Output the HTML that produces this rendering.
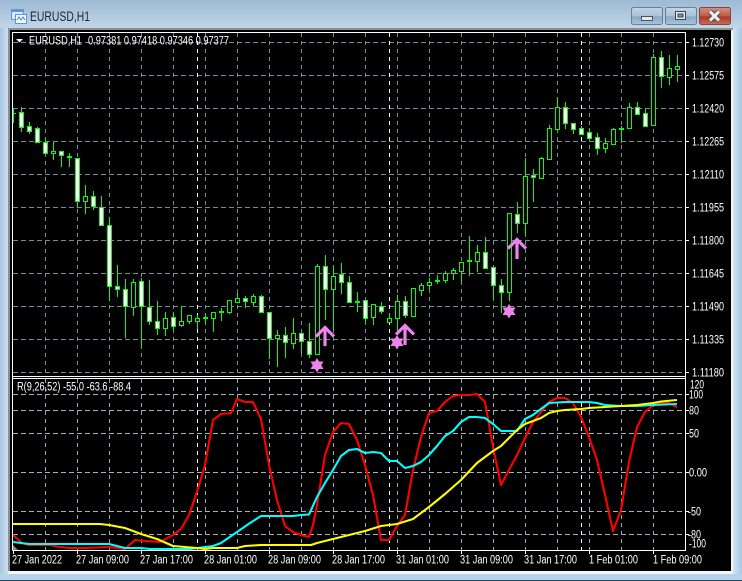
<!DOCTYPE html>
<html><head><meta charset="utf-8"><title>EURUSD,H1</title>
<style>
html,body{margin:0;padding:0;width:742px;height:581px;overflow:hidden;background:#b9d1e8}
svg{display:block;position:absolute;left:0;top:0}
text{font-family:"Liberation Sans",sans-serif}
</style></head><body>
<svg width="742" height="581" viewBox="0 0 742 581" xmlns="http://www.w3.org/2000/svg">
<defs>
<linearGradient id="tb" x1="0" y1="0" x2="0" y2="1"><stop offset="0" stop-color="#9db9d4"/><stop offset="1" stop-color="#c4d7e9"/></linearGradient>
<linearGradient id="lb" x1="0" y1="0" x2="1" y2="0"><stop offset="0" stop-color="#a9c5e2"/><stop offset="1" stop-color="#d3e3f1"/></linearGradient>
<linearGradient id="rb" x1="0" y1="0" x2="1" y2="0"><stop offset="0" stop-color="#d3e3f1"/><stop offset="1" stop-color="#a9c8e6"/></linearGradient>
<linearGradient id="btn" x1="0" y1="0" x2="0" y2="1"><stop offset="0" stop-color="#c3d4e4"/><stop offset=".5" stop-color="#a9c1d8"/><stop offset=".55" stop-color="#88a8c6"/><stop offset="1" stop-color="#a8c6de"/></linearGradient>
<linearGradient id="cl" x1="0" y1="0" x2="0" y2="1"><stop offset="0" stop-color="#d98f82"/><stop offset=".5" stop-color="#c25a4a"/><stop offset=".55" stop-color="#ad3626"/><stop offset="1" stop-color="#c86f56"/></linearGradient>
</defs>
<rect width="742" height="581" fill="#b9d1e8"/>
<rect width="742" height="29" fill="url(#tb)"/>
<rect x="0" y="28" width="9" height="553" fill="url(#lb)"/>
<rect x="733" y="28" width="9" height="553" fill="url(#rb)"/>
<rect x="0" y="574" width="742" height="6" fill="#b5d2ea"/>
<rect x="0" y="580" width="742" height="1" fill="#1b4c60"/>
<rect x="8" y="28" width="725" height="2" fill="#8c8f92"/>
<rect x="8" y="28" width="2" height="544" fill="#8c8f92"/>
<rect x="8" y="571" width="725" height="3" fill="#f2f6fa"/>
<rect x="731" y="30" width="2" height="544" fill="#f2f6fa"/>
<rect x="10" y="30" width="721" height="541" fill="#000"/>

<!-- title icon -->
<g shape-rendering="crispEdges">
<rect x="11.5" y="9.5" width="12" height="10" fill="#dbe9f6" stroke="#5a97d6"/>
<rect x="12" y="10" width="11" height="2" fill="#5a97d6"/>
<rect x="15.5" y="14.5" width="11" height="9" fill="#f2f7fc" stroke="#5a97d6"/>
<path d="M17 20l2-3 2 3 2-3 2 3" fill="none" stroke="#4f86c0" stroke-width="1" shape-rendering="auto"/>
</g>
<text x="30" y="21" font-size="13.5" fill="#1c2a38" textLength="60" lengthAdjust="spacingAndGlyphs">EURUSD,H1</text>

<!-- window buttons -->
<rect x="631.5" y="7.5" width="31" height="17" rx="2" fill="url(#btn)" stroke="#6b7f93"/>
<rect x="641.5" y="16.5" width="11" height="4" fill="#e8e8e8" stroke="#4a5560"/>
<rect x="665.5" y="7.5" width="31" height="17" rx="2" fill="url(#btn)" stroke="#6b7f93"/>
<rect x="675.5" y="11.5" width="10" height="8" fill="#e8e8e8" stroke="#3c4650"/>
<rect x="678" y="14" width="5" height="3" fill="#7d94aa" stroke="#3c4650" stroke-width="1"/>
<rect x="699.5" y="7.5" width="31" height="17" rx="2" fill="url(#cl)" stroke="#7c4a44"/>
<path d="M710 11.500l9 9M719 11.500l-9 9" stroke="#3e4448" stroke-width="5" fill="none"/>
<path d="M710 11.500l9 9M719 11.500l-9 9" stroke="#ececec" stroke-width="3.200" fill="none"/>

<!-- grid -->
<g stroke="#778899" stroke-width="1" stroke-dasharray="5 3" shape-rendering="crispEdges" fill="none">
<path d="M13 42.5H685M13 75.5H685M13 108.5H685M13 141.5H685M13 174.5H685M13 207.5H685M13 240.5H685M13 273.5H685M13 306.5H685M13 339.5H685M13 372.5H685"/>
<path d="M13 394.5H685M13 410.5H685M13 433.5H685M13 472.5H685M13 511.5H685M13 534.5H685" stroke="#a8b2bc"/>
<path stroke-dasharray="4 4" d="M45.5 33V376M77.5 33V376M109.5 33V376M141.5 33V376M173.5 33V376M205.5 33V376M237.5 33V376M269.5 33V376M301.5 33V376M333.5 33V376M365.5 33V376M397.5 33V376M429.5 33V376M461.5 33V376M493.5 33V376M525.5 33V376M557.5 33V376M589.5 33V376M621.5 33V376M653.5 33V376"/>
<path stroke-dasharray="4 4" stroke="#9aa6b2" d="M45.5 379V550M77.5 379V550M109.5 379V550M141.5 379V550M173.5 379V550M205.5 379V550M237.5 379V550M269.5 379V550M301.5 379V550M333.5 379V550M365.5 379V550M397.5 379V550M429.5 379V550M461.5 379V550M493.5 379V550M525.5 379V550M557.5 379V550M589.5 379V550M621.5 379V550M653.5 379V550"/>
<path stroke="#fff" stroke-dasharray="4 4" d="M197.5 33V376M389.5 33V376M581.5 33V376M197.5 379V550M389.5 379V550M581.5 379V550"/>
</g>

<!-- wicks -->
<path shape-rendering="crispEdges" fill="none" stroke="#00ff00" stroke-width="1" d="M13.5 108V123M21.5 107V132M29.5 122V134M37.5 127V143M45.5 138V155M53.5 141V160M61.5 151V167M69.5 153V167M77.5 158V208M85.5 185V214M93.5 191V210M101.5 196V225M109.5 217V301M117.5 265V297M125.5 279V338M133.5 279V316M141.5 278V347M149.5 280V325M157.5 301V335M165.5 312V336M173.5 312V330M181.5 306V327M189.5 315V324M197.5 315V329M205.5 313V324M213.5 312V332M221.5 308V321M229.5 300V314M237.5 293V302M245.5 296V308M253.5 294V306M261.5 295V312M269.5 312V359M277.5 330V367M285.5 327V358M293.5 318V349M301.5 333V353M309.5 323V358M317.5 264V355M325.5 255V320M333.5 267V331M341.5 263V294M349.5 276V302M357.5 292V312M365.5 300V323M373.5 304V325M381.5 302V314M389.5 313V322M397.5 295V330M405.5 296V318M413.5 288V317M421.5 283V296M429.5 278V290M437.5 275V284M445.5 271V283M453.5 268V280M461.5 262V283M469.5 236V276M477.5 245V272M485.5 237V268M493.5 267V300M501.5 279V313M509.5 213V301M517.5 202V233M525.5 158V235M533.5 169V202M541.5 157V179M549.5 125V160M557.5 97V131M565.5 102V129M573.5 123V134M581.5 126V134M589.5 128V138M597.5 133V155M605.5 138V153M613.5 128V144M621.5 126V143M629.5 103V128M637.5 102V115M645.5 108V126M653.5 54V125M661.5 51V88M669.5 55V85M677.5 55V82"/>
<!-- doji ticks -->
<path shape-rendering="crispEdges" fill="none" stroke="#00ff00" stroke-width="1" d="M13 113.5H16M35 128.5H40M67 157.5H72M203 318.5H208M219 312.5H224M355 302.5H360M435 281.5H440M467 261.5H472M619 129.5H624M67 156.5H72M203 317.5H208M219 311.5H224M355 301.5H360M435 280.5H440M467 260.5H472M619 128.5H624"/>
<!-- bearish bodies -->
<path shape-rendering="crispEdges" fill="#fff" stroke="#00ff00" stroke-width="1" d="M19.5 112.5h4V127.5h-4zM27.5 126.5h4V131.5h-4zM35.5 128.5h4V142.5h-4zM43.5 142.5h4V153.5h-4zM59.5 151.5h4V155.5h-4zM75.5 158.5h4V201.5h-4zM91.5 196.5h4V206.5h-4zM99.5 207.5h4V225.5h-4zM107.5 225.5h4V286.5h-4zM115.5 286.5h4V289.5h-4zM123.5 289.5h4V306.5h-4zM139.5 281.5h4V306.5h-4zM147.5 307.5h4V321.5h-4zM155.5 321.5h4V328.5h-4zM171.5 317.5h4V326.5h-4zM243.5 298.5h4V301.5h-4zM259.5 296.5h4V312.5h-4zM267.5 312.5h4V338.5h-4zM283.5 335.5h4V342.5h-4zM299.5 333.5h4V341.5h-4zM307.5 341.5h4V354.5h-4zM323.5 266.5h4V289.5h-4zM339.5 274.5h4V282.5h-4zM347.5 282.5h4V302.5h-4zM363.5 300.5h4V318.5h-4zM379.5 306.5h4V311.5h-4zM403.5 301.5h4V315.5h-4zM483.5 252.5h4V268.5h-4zM491.5 267.5h4V285.5h-4zM499.5 285.5h4V292.5h-4zM515.5 214.5h4V223.5h-4zM531.5 175.5h4V177.5h-4zM563.5 107.5h4V123.5h-4zM571.5 123.5h4V129.5h-4zM579.5 128.5h4V134.5h-4zM587.5 132.5h4V138.5h-4zM595.5 137.5h4V148.5h-4zM635.5 107.5h4V114.5h-4zM643.5 113.5h4V126.5h-4zM659.5 57.5h4V76.5h-4z"/>
<!-- bullish bodies -->
<path shape-rendering="crispEdges" fill="#000" stroke="#00ff00" stroke-width="1" d="M51.5 151.5h4V153.5h-4zM83.5 196.5h4V201.5h-4zM131.5 282.5h4V307.5h-4zM163.5 318.5h4V328.5h-4zM179.5 321.5h4V325.5h-4zM187.5 315.5h4V321.5h-4zM195.5 318.5h4V321.5h-4zM211.5 312.5h4V318.5h-4zM227.5 300.5h4V312.5h-4zM235.5 298.5h4V302.5h-4zM251.5 296.5h4V302.5h-4zM275.5 335.5h4V338.5h-4zM291.5 333.5h4V343.5h-4zM315.5 266.5h4V354.5h-4zM331.5 276.5h4V289.5h-4zM371.5 304.5h4V317.5h-4zM387.5 318.5h4V322.5h-4zM395.5 301.5h4V318.5h-4zM411.5 288.5h4V316.5h-4zM419.5 285.5h4V290.5h-4zM427.5 282.5h4V285.5h-4zM443.5 273.5h4V280.5h-4zM451.5 270.5h4V273.5h-4zM459.5 262.5h4V271.5h-4zM475.5 252.5h4V261.5h-4zM507.5 213.5h4V292.5h-4zM523.5 176.5h4V223.5h-4zM539.5 158.5h4V178.5h-4zM547.5 128.5h4V159.5h-4zM555.5 107.5h4V129.5h-4zM603.5 143.5h4V148.5h-4zM611.5 129.5h4V144.5h-4zM627.5 107.5h4V128.5h-4zM651.5 57.5h4V125.5h-4zM667.5 68.5h4V77.5h-4zM675.5 66.5h4V69.5h-4z"/>

<!-- arrows -->
<g fill="none" stroke="#ee82ee" stroke-width="3.200">
<path d="M316 336.500L325 327.500L334 336.500M325 327.500V346"/>
<path d="M396 334.500L405 325.500L414 334.500M405 325.500V345"/>
<path d="M508 248.500L517 239.500L526 248.500M517 239.500V259"/>
</g>
<!-- stars -->
<g fill="#ee82ee">
<path d="M317 358l6.500 11h-13z"/><path d="M317 372.500l6.500-11h-13z"/>
<path d="M397 335l6.500 11h-13z"/><path d="M397 349.500l6.500-11h-13z"/>
<path d="M509 304l6.500 11h-13z"/><path d="M509 318.500l6.500-11h-13z"/>
</g>

<!-- indicator -->
<path d="M13 545L18 550H13z" fill="#8a8a8a"/>
<g fill="none" stroke-width="2.100" stroke-linejoin="round">
<path stroke="#ff0000" d="M13 535L22 543L29 545L50 545L60 547L70 548L85 548L109 547L125 549L135 540L145 541L160 542L173 535L181 529L189 515L197 492L205 465L213 420L221 414L231 413L237 399L245 402L253 402L261 419L269 465L277 500L285 526L293 532L301 535L309 537L313 525L317 505L325 455L333 432L341 423L349 424L357 440L365 465L373 495L381 540L389 540L397 526L405 515L413 470L421 437L429 413L437 411L445 402L453 396L461 395L469 395L477 394L485 402L493 447L501 485L509 470L517 455L525 438L533 422L541 412L549 402L557 398L565 398L573 403L581 417L589 437L597 460L605 495L613 531L621 510L629 462L637 427L645 412L653 405L661 403L669 403L677 407"/>
<path stroke="#00ffff" d="M13 542L21 543L29 544L100 544L109 544L117 546L125 548L141 548L150 549L173 549L190 549L205 547L213 546L221 543L237 532L250 523L261 516L269 516L293 516L301 515L309 514.500L317 497L325 483L333 470L341 456L349 450L357 449L365 453L373 452L381 453L389 461L397 461L405 468L413 466L421 462L429 455L437 446L445 436L453 431L461 422L469 417L477 417L485 418L493 424L501 431L517 431L525 419L533 415L541 409L549 403L565 402L589 402L597 403L605 405L621 406L637 406L653 405L677 404"/>
<path stroke="#ffff00" d="M13 524L100 524L109 525L125 528L141 534L157 539L173 546L197 548L205 549L213 548L237 548L245 546L261 545L311 545L317 543L333 539L349 535L365 531L381 526L397 524L413 519L429 507L445 494L461 480L477 463L493 451L501 446L517 430L525 424L541 418L549 413L557 411L565 410L581 409L589 408L605 407L621 406L637 405L653 403L661 401.500L677 400"/>
</g>

<!-- frame -->
<g shape-rendering="crispEdges" fill="none" stroke="#fff" stroke-width="1">
<path d="M12.500 550.500V32.500H685.500V550.500H12.500"/>
<path d="M13 376.500H685M13 378.500H685"/>
<path d="M686 42.500h3M686 75.500h3M686 108.500h3M686 141.500h3M686 174.500h3M686 207.500h3M686 240.500h3M686 273.500h3M686 306.500h3M686 339.500h3M686 372.500h3M686 394.500h3M686 410.500h3M686 433.500h3M686 472.500h3M686 511.500h3M686 534.500h3"/>
<path d="M13.500 551v3M77.500 551v3M141.500 551v3M205.500 551v3M269.500 551v3M333.500 551v3M397.500 551v3M461.500 551v3M525.500 551v3M589.500 551v3M653.500 551v3"/>
</g>

<!-- legends -->
<path d="M16 39h7l-3.500 3.500z" fill="#fff"/>
<g fill="#fff" font-size="11.500">
<text x="29" y="44.500" textLength="53" lengthAdjust="spacingAndGlyphs">EURUSD,H1</text>
<text x="88" y="44.500" textLength="141" lengthAdjust="spacingAndGlyphs">0.97381 0.97418 0.97346 0.97377</text>
<text x="17" y="390.500" textLength="114" lengthAdjust="spacingAndGlyphs">R(9,26,52) -55.0 -63.6 -88.4</text>

<text x="692" y="46.500" textLength="32" lengthAdjust="spacingAndGlyphs">1.12730</text>
<text x="692" y="79.500" textLength="32" lengthAdjust="spacingAndGlyphs">1.12575</text>
<text x="692" y="112.500" textLength="32" lengthAdjust="spacingAndGlyphs">1.12420</text>
<text x="692" y="145.500" textLength="32" lengthAdjust="spacingAndGlyphs">1.12265</text>
<text x="692" y="178.500" textLength="32" lengthAdjust="spacingAndGlyphs">1.12110</text>
<text x="692" y="211.500" textLength="32" lengthAdjust="spacingAndGlyphs">1.11955</text>
<text x="692" y="244.500" textLength="32" lengthAdjust="spacingAndGlyphs">1.11800</text>
<text x="692" y="277.500" textLength="32" lengthAdjust="spacingAndGlyphs">1.11645</text>
<text x="692" y="310.500" textLength="32" lengthAdjust="spacingAndGlyphs">1.11490</text>
<text x="692" y="343.500" textLength="32" lengthAdjust="spacingAndGlyphs">1.11335</text>
<text x="692" y="376.500" textLength="32" lengthAdjust="spacingAndGlyphs">1.11180</text>

<text x="690" y="388.500" textLength="14" lengthAdjust="spacingAndGlyphs">120</text>
<text x="689" y="398.500" textLength="14" lengthAdjust="spacingAndGlyphs">100</text>
<text x="689" y="414.500" textLength="10" lengthAdjust="spacingAndGlyphs">80</text>
<text x="689" y="437.500" textLength="10" lengthAdjust="spacingAndGlyphs">50</text>
<text x="689" y="476.500" textLength="18" lengthAdjust="spacingAndGlyphs">0.00</text>
<text x="688" y="515.500" textLength="13" lengthAdjust="spacingAndGlyphs">-50</text>
<text x="688" y="538.500" textLength="13" lengthAdjust="spacingAndGlyphs">-80</text>
<text x="689" y="547.500" textLength="17" lengthAdjust="spacingAndGlyphs">-100</text>

<text x="12" y="563.500" textLength="50" lengthAdjust="spacingAndGlyphs">27 Jan 2022</text>
<text x="76" y="563.500" textLength="53" lengthAdjust="spacingAndGlyphs">27 Jan 09:00</text>
<text x="140" y="563.500" textLength="53" lengthAdjust="spacingAndGlyphs">27 Jan 17:00</text>
<text x="204" y="563.500" textLength="53" lengthAdjust="spacingAndGlyphs">28 Jan 01:00</text>
<text x="268" y="563.500" textLength="53" lengthAdjust="spacingAndGlyphs">28 Jan 09:00</text>
<text x="332" y="563.500" textLength="53" lengthAdjust="spacingAndGlyphs">28 Jan 17:00</text>
<text x="396" y="563.500" textLength="53" lengthAdjust="spacingAndGlyphs">31 Jan 01:00</text>
<text x="460" y="563.500" textLength="53" lengthAdjust="spacingAndGlyphs">31 Jan 09:00</text>
<text x="524" y="563.500" textLength="53" lengthAdjust="spacingAndGlyphs">31 Jan 17:00</text>
<text x="589" y="563.500" textLength="49" lengthAdjust="spacingAndGlyphs">1 Feb 01:00</text>
<text x="653" y="563.500" textLength="49" lengthAdjust="spacingAndGlyphs">1 Feb 09:00</text>
</g>
</svg>
</body></html>
